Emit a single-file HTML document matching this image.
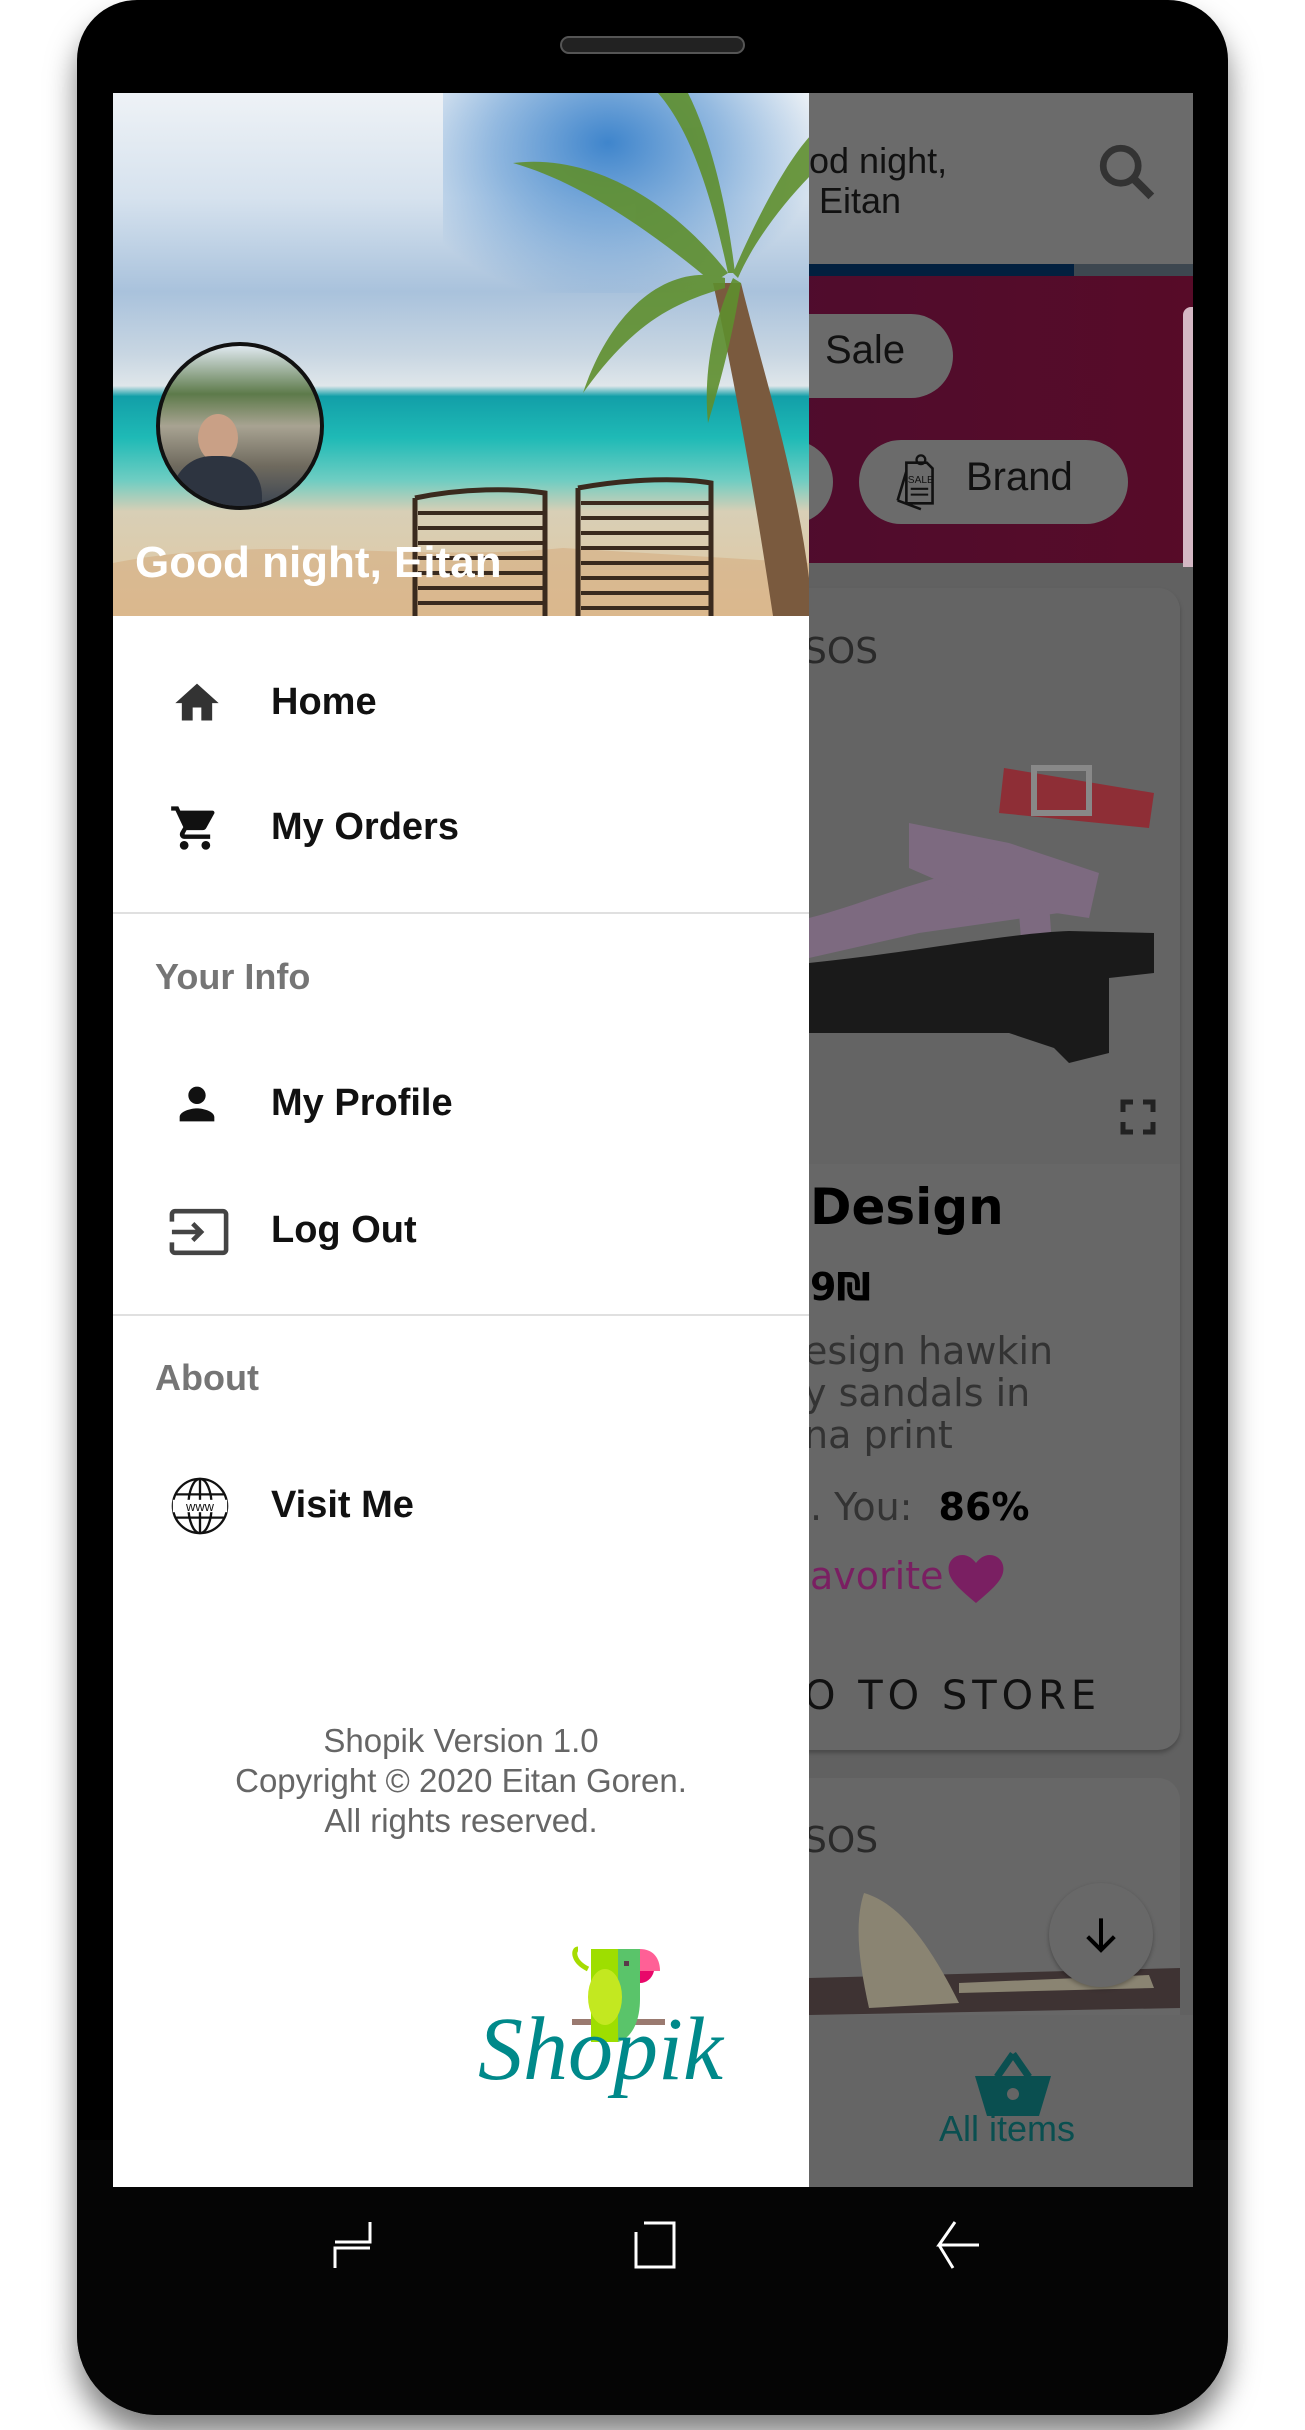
<!DOCTYPE html>
<html><head><meta charset="utf-8">
<style>
*{margin:0;padding:0;box-sizing:border-box}
body{width:1305px;height:2430px;background:#fff;position:relative;overflow:hidden;font-family:"Liberation Sans",Arial,sans-serif}
.abs{position:absolute}
.phone{left:77px;top:0;width:1151px;height:2415px;background:#000;border-radius:60px 60px 80px 80px;box-shadow:0 20px 30px rgba(0,0,0,.5)}
.item{position:absolute;left:271px;font-size:38px;font-weight:bold;color:#111;white-space:nowrap}
.sec{position:absolute;left:155px;font-size:36px;font-weight:bold;color:#757575;white-space:nowrap}
.ic{position:absolute;left:170px}
.rt{position:absolute;font-family:"DejaVu Sans",sans-serif;white-space:nowrap}
</style></head><body>
<div class="abs phone"></div>
<div class="abs" style="left:77px;top:2140px;width:1151px;height:275px;background:#050505;border-radius:0 0 80px 80px"></div>
<div class="abs" style="left:560px;top:36px;width:185px;height:18px;border-radius:9px;background:#222;border:2px solid #555"></div>

<div class="abs" style="left:113px;top:93px;width:1080px;height:2094px;background:#616161;overflow:hidden">
  <div class="abs" style="left:0;top:0;width:1080px;height:171px;background:#6b6b6b"></div>
  <div class="abs" style="left:696px;top:48px;font-size:36px;color:#111;line-height:40px">od night,<br>&nbsp;Eitan</div>
  <svg class="abs" style="left:980px;top:45px" width="70" height="70" viewBox="0 0 24 24"><circle cx="9.5" cy="9.5" r="6" fill="none" stroke="#333" stroke-width="2.3"/><path d="M14 14l6 6" stroke="#333" stroke-width="2.8"/></svg>
  <div class="abs" style="left:0;top:171px;width:961px;height:12px;background:#02203f"></div>
  <div class="abs" style="left:961px;top:171px;width:119px;height:12px;background:#3d4750"></div>
  <div class="abs" style="left:0;top:183px;width:1080px;height:287px;background:linear-gradient(90deg,#3d0c3a,#4a0d30 40%,#570b28)"></div>
  <div class="abs" style="left:1070px;top:214px;width:10px;height:260px;background:#d4b8c4;border-radius:8px 0 0 0"></div>
  <div class="abs" style="left:600px;top:221px;width:240px;height:84px;border-radius:42px;background:#6b6b6b"></div>
  <div class="abs" style="left:712px;top:235px;font-size:40px;color:#111">Sale</div>
  <div class="abs" style="left:560px;top:347px;width:160px;height:84px;border-radius:42px;background:#6b6b6b"></div>
  <div class="abs" style="left:746px;top:347px;width:269px;height:84px;border-radius:42px;background:#6b6b6b"></div>
  <svg class="abs" style="left:781px;top:358px" width="48" height="64" viewBox="0 0 16 22"><path d="M4 4h7l2 2v12H4z M1 17l3-10 M1 17l8 3" fill="none" stroke="#111" stroke-width="0.9"/><circle cx="9" cy="3" r="1.5" fill="none" stroke="#111" stroke-width="0.8"/><text x="4.5" y="11" font-size="3.5" font-family="Liberation Sans" fill="#111">SALE</text><path d="M5.5 13h6M5.5 15h6" stroke="#111" stroke-width="0.7"/></svg>
  <div class="abs" style="left:853px;top:362px;font-size:40px;color:#111">Brand</div>

  <div class="abs" style="left:600px;top:495px;width:467px;height:1162px;border-radius:22px;background:#676767;box-shadow:0 3px 4px rgba(0,0,0,.25)"></div>
  <div class="abs" style="left:600px;top:495px;width:467px;height:576px;border-radius:22px 22px 0 0;background:#646464"></div>
  <div class="rt" style="left:691px;top:538px;font-size:36px;color:#2a2a2a">SOS</div>
  <svg class="abs" style="left:696px;top:580px" width="370" height="500" viewBox="0 0 370 500">
    <path d="M195 95 L345 120 L340 155 L190 140 Z" fill="#8e2e36"/>
    <rect x="225" y="95" width="55" height="45" fill="none" stroke="#888" stroke-width="6"/>
    <path d="M0 245 C60 230 120 200 200 190 L250 205 L250 240 L110 260 L0 285 Z" fill="#7d6a80"/>
    <path d="M100 150 L200 170 L290 200 L280 245 L180 230 L100 195 Z" fill="#7d6a80"/>
    <path d="M210 240 L240 230 L245 300 L215 305 Z" fill="#7d6a80"/>
    <path d="M0 290 C100 280 200 260 260 258 L345 260 L345 300 L300 305 L300 380 L260 390 L245 375 L200 360 L0 360 Z" fill="#1a1a1a"/>
  </svg>
  <svg class="abs" style="left:1005px;top:1004px" width="40" height="40" viewBox="0 0 24 24"><path d="M3 9V3h6M15 3h6v6M21 15v6h-6M9 21H3v-6" fill="none" stroke="#222" stroke-width="3"/></svg>
  <div class="rt" style="left:697px;top:1085px;font-size:50px;color:#000;font-weight:bold">Design</div>
  <div class="rt" style="left:697px;top:1172px;font-size:38px;color:#000;font-weight:bold">9₪</div>
  <div class="rt" style="left:691px;top:1237px;font-size:38px;color:#333;line-height:42px">esign hawkin<br>y sandals in<br>na print</div>
  <div class="rt" style="left:697px;top:1392px;font-size:38px;color:#333">. You: <b style="color:#000;margin-left:14px">86%</b></div>
  <div class="rt" style="left:697px;top:1461px;font-size:38px;color:#7a1f62">avorite</div>
  <svg class="abs" style="left:835px;top:1462px" width="56" height="48" viewBox="0 0 24 21"><path d="M12 21C5 15 0 11 0 6 0 2.5 2.7 0 6 0c2.5 0 4.5 1.5 6 3.5C13.5 1.5 15.5 0 18 0c3.3 0 6 2.5 6 6 0 5-5 9-12 15z" fill="#7a1f62"/></svg>
  <div class="rt" style="left:691px;top:1580px;font-size:40px;color:#111;letter-spacing:5px">O TO STORE</div>

  <div class="abs" style="left:600px;top:1685px;width:467px;height:400px;border-radius:22px;background:#676767"></div>
  <div class="rt" style="left:691px;top:1727px;font-size:36px;color:#2a2a2a">SOS</div>
  <svg class="abs" style="left:696px;top:1790px" width="371" height="155" viewBox="0 0 371 155">
    <path d="M0 95 L371 85 L371 125 L0 132 Z" fill="#3e3333"/>
    <path d="M55 10 C90 20 120 60 150 120 L60 125 C50 80 45 40 55 10 Z" fill="#8a8472"/>
    <path d="M150 100 L340 92 L345 105 L150 110Z" fill="#8a8472"/>
  </svg>
  <div class="abs" style="left:936px;top:1790px;width:104px;height:104px;border-radius:52px;background:#686868;box-shadow:0 2px 4px rgba(0,0,0,.3)"></div>
  <svg class="abs" style="left:968px;top:1822px" width="40" height="40" viewBox="0 0 24 24"><path d="M12 2v19M4 13l8 8 8-8" fill="none" stroke="#000" stroke-width="2.4"/></svg>
  <div class="abs" style="left:0;top:1922px;width:1080px;height:172px;background:#656565"></div>
  <svg class="abs" style="left:862px;top:1959px" width="76" height="66" viewBox="0 0 76 66"><path d="M38 2 L22 25 M38 2 L54 25" stroke="#0a4f50" stroke-width="7" fill="none"/><path d="M0 24h76l-12 40H12z" fill="#0a4f50"/><circle cx="38" cy="42" r="6" fill="#656565"/></svg>
  <div class="abs" style="left:826px;top:2015px;font-size:36px;color:#0a4f50">All items</div>
</div>

<div class="abs" style="left:113px;top:93px;width:696px;height:2094px;background:#fff;overflow:hidden">
  <div class="abs" style="left:0;top:0;width:696px;height:523px;background:linear-gradient(180deg,#eef2f6 0%,#d6e2ee 20%,#a9c2dc 38%,#c8d6e2 50%,#dfe6ea 56%,#129fa8 58%,#1fbab6 66%,#6ecdc2 74%,#d8cfb6 80%,#e2c8a0 100%)"></div>
  <div class="abs" style="left:330px;top:0;width:366px;height:200px;background:radial-gradient(ellipse at 45% 25%,#3f85cc 0%,rgba(63,133,204,.5) 40%,rgba(63,133,204,0) 75%)"></div>
  <svg class="abs" style="left:0;top:0" width="696" height="523" viewBox="0 0 696 523">
    <path d="M0 470 C150 440 300 470 450 455 L696 470 L696 523 L0 523Z" fill="#d4a77a" opacity=".5"/>
    <path d="M600 190 C620 280 640 390 660 523 L700 523 C690 400 650 280 628 190Z" fill="#7a5a3e"/>
    <g fill="#5f8f2e" opacity=".9">
      <path d="M615 180 C560 110 480 60 400 70 C470 90 540 140 600 190Z"/>
      <path d="M612 185 C560 170 500 210 470 300 C520 230 560 210 612 195Z"/>
      <path d="M615 180 C600 110 580 40 545 0 L575 0 C600 50 615 120 622 180Z"/>
      <path d="M620 180 C650 110 680 60 700 40 L700 80 C670 110 640 150 625 185Z"/>
      <path d="M620 185 C600 230 590 280 595 330 C610 280 620 240 628 190Z"/>
    </g>
    <g stroke="#3a2a1e" stroke-width="5" fill="none">
      <path d="M302 405 C350 395 400 395 432 400 L432 523 M302 405 L302 523"/>
      <path d="M465 395 C520 385 570 385 598 390 L598 523 M465 395 L465 523"/>
    </g>
    <g stroke="#3a2a1e" stroke-width="4">
      <path d="M305 420h125M305 435h125M305 450h125M305 465h125M305 480h125M305 495h125M305 510h125"/>
      <path d="M468 410h128M468 425h128M468 440h128M468 455h128M468 470h128M468 485h128M468 500h128M468 515h128"/>
    </g>
  </svg>
  <div class="abs" style="left:43px;top:249px;width:168px;height:168px;border-radius:50%;border:4px solid #111;background:linear-gradient(180deg,#dfe8ef 0%,#5d7a4a 30%,#a8a392 50%,#6f6a5e 75%,#3c4552 100%);overflow:hidden">
    <div class="abs" style="left:38px;top:68px;width:40px;height:48px;border-radius:50%;background:#c9a086"></div>
    <div class="abs" style="left:12px;top:110px;width:90px;height:70px;border-radius:40px 40px 0 0;background:#2d3440"></div>
  </div>
  <div class="abs" style="left:22px;top:445px;font-size:44px;font-weight:bold;color:#fff;white-space:nowrap">Good night, Eitan</div>

  <svg class="ic" style="left:58px;top:584px" width="52" height="48" viewBox="0 0 24 22"><path d="M10 20v-6h4v6h5v-8h3L12 3 2 12h3v8z" fill="#333"/></svg>
  <div class="item" style="left:158px;top:588px">Home</div>
  <svg class="ic" style="left:56px;top:709px" width="52" height="52" viewBox="0 0 24 24"><path d="M7 18c-1.1 0-2 .9-2 2s.9 2 2 2 2-.9 2-2-.9-2-2-2zM1 2v2h2l3.6 7.6-1.4 2.4c-.1.3-.2.6-.2 1 0 1.1.9 2 2 2h12v-2H7.4c-.1 0-.2-.1-.2-.2v-.1l.9-1.7h7.4c.8 0 1.4-.4 1.7-1l3.6-6.5c.1-.2.2-.3.2-.5 0-.6-.4-1-1-1H5.2l-.9-2H1zm16 16c-1.1 0-2 .9-2 2s.9 2 2 2 2-.9 2-2-.9-2-2-2z" fill="#111"/></svg>
  <div class="item" style="left:158px;top:713px">My Orders</div>
  <div class="abs" style="left:0;top:819px;width:696px;height:2px;background:#e0e0e0"></div>
  <div class="sec" style="left:42px;top:863px">Your Info</div>
  <svg class="ic" style="left:58px;top:985px" width="52" height="52" viewBox="0 0 24 24"><path d="M12 12c2.2 0 4-1.8 4-4s-1.8-4-4-4-4 1.8-4 4 1.8 4 4 4zm0 2c-2.7 0-8 1.3-8 4v2h16v-2c0-2.7-5.3-4-8-4z" fill="#111"/></svg>
  <div class="item" style="left:158px;top:989px">My Profile</div>
  <svg class="ic" style="left:56px;top:1114px" width="60" height="50" viewBox="0 0 28 24"><path d="M1 7V3.5C1 2.7 1.7 2 2.5 2h23c.8 0 1.5.7 1.5 1.5v17c0 .8-.7 1.5-1.5 1.5h-23C1.7 22 1 21.3 1 20.5V17" fill="none" stroke="#444" stroke-width="2.2"/><path d="M1 12h14M11 8l4 4-4 4" fill="none" stroke="#444" stroke-width="2.2"/></svg>
  <div class="item" style="left:158px;top:1116px">Log Out</div>
  <div class="abs" style="left:0;top:1221px;width:696px;height:2px;background:#e0e0e0"></div>
  <div class="sec" style="left:42px;top:1264px">About</div>
  <svg class="ic" style="left:56px;top:1382px" width="62" height="62" viewBox="0 0 24 24"><g fill="none" stroke="#111" stroke-width="0.9"><circle cx="12" cy="12" r="10.5"/><ellipse cx="12" cy="12" rx="4.5" ry="10.5"/><path d="M12 1.5v21M2.5 7.5h19M2.5 16.5h19"/></g><rect x="1.5" y="9.6" width="21" height="4.8" fill="#fff"/><text x="12" y="14" font-size="5" text-anchor="middle" font-family="Liberation Sans" fill="#111">www</text></svg>
  <div class="item" style="left:158px;top:1391px">Visit Me</div>

  <div class="abs" style="left:0;top:1628px;width:696px;text-align:center;font-size:33px;color:#666;line-height:40px">Shopik Version 1.0<br>Copyright © 2020 Eitan Goren.<br>All rights reserved.</div>

  <svg class="abs" style="left:355px;top:1846px" width="280" height="180" viewBox="0 0 280 180">
    <rect x="104" y="80" width="93" height="6" fill="#9a7a70"/>
    <path d="M110 10 C105 10 104 22 120 30" fill="none" stroke="#a6dc00" stroke-width="5"/>
    <path d="M123 10 h27 v93 c-10 0 -20 0 -27 0z" fill="#9ede00"/>
    <path d="M150 10 h22 v50 c0 25 -10 40 -22 43z" fill="#5ac46a"/>
    <ellipse cx="137" cy="58" rx="17" ry="28" fill="#c3e820"/>
    <rect x="156" y="22" width="5" height="5" fill="#5a3a4a"/>
    <path d="M172 10 c12 0 20 8 20 22 h-20z" fill="#ff6096"/>
    <path d="M172 32 h14 c-2 8 -8 12 -14 12z" fill="#e8086a"/>
    <text x="10" y="140" font-family="Liberation Serif" font-style="italic" font-size="90" fill="#00898a">Shopik</text>
  </svg>
</div>

<svg class="abs" style="left:330px;top:2220px" width="50" height="50" viewBox="0 0 50 50"><path d="M40 2v20H5M5 48V28h35" fill="none" stroke="#fff" stroke-width="3"/></svg>
<svg class="abs" style="left:632px;top:2220px" width="46" height="50" viewBox="0 0 46 50"><path d="M12 3h30v44H4V12" fill="none" stroke="#fff" stroke-width="3"/></svg>
<svg class="abs" style="left:933px;top:2220px" width="50" height="50" viewBox="0 0 50 50"><path d="M22 2L6 25h40M6 25l14 23" fill="none" stroke="#fff" stroke-width="3"/></svg>
</body></html>
